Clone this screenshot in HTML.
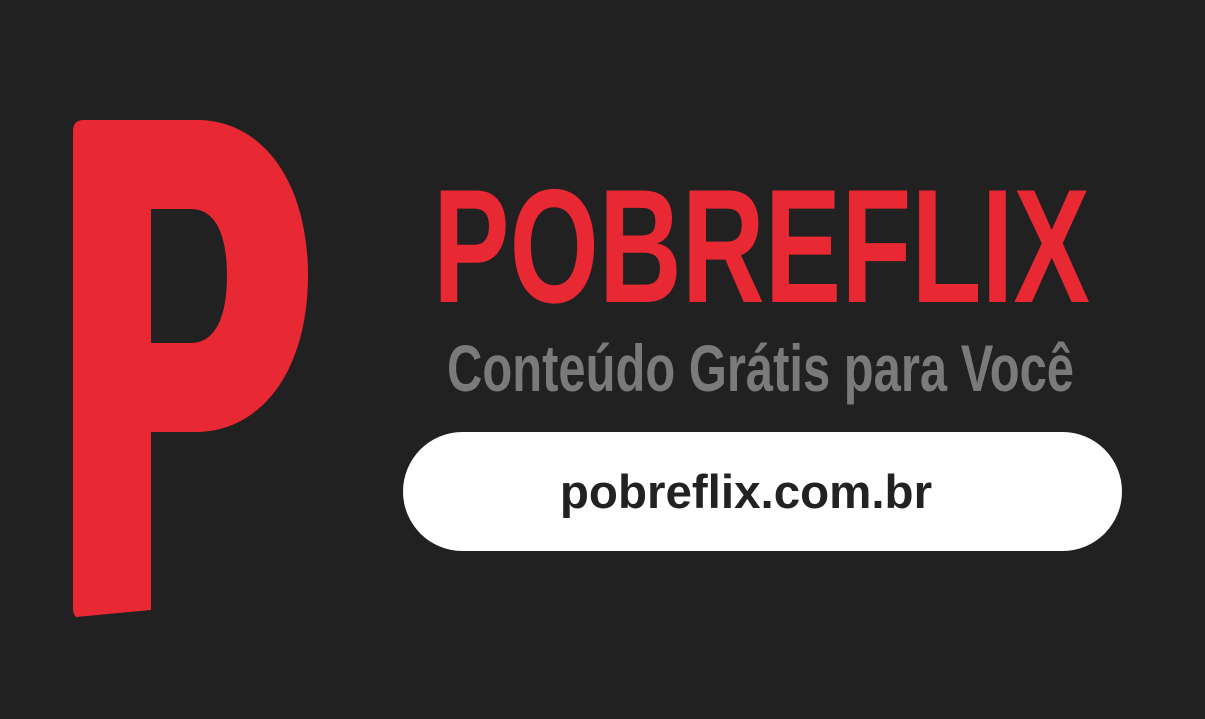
<!DOCTYPE html>
<html><head><meta charset="utf-8"><style>
html,body{margin:0;padding:0;background:#212121;width:1205px;height:719px;overflow:hidden}
</style></head><body>
<svg width="1205" height="719" viewBox="0 0 1205 719" xmlns="http://www.w3.org/2000/svg">
<rect width="1205" height="719" fill="#212121"/>
<path fill="#e82832" fill-rule="evenodd" d="M84 120 L200 120 C265 122 308 185 308 275 C308 370 262 432 195 432 L151 432 L151 610 L76 617 Q73 614 73 608 L73 131 Q73 120 84 120 Z M151 209 L191 209 C218 209 227 240 227 276 C227 315 216 343 191 343 L151 343 Z"/>
<text x="433" y="302" font-family="Liberation Sans, sans-serif" font-weight="bold" font-size="162" fill="#e82832" textLength="657" lengthAdjust="spacingAndGlyphs">POBREFLIX</text>
<text x="447" y="391" font-family="Liberation Sans, sans-serif" font-weight="bold" font-size="66" fill="#7a7a7a" textLength="627" lengthAdjust="spacingAndGlyphs">Conteúdo Grátis para Você</text>
<rect x="403" y="432" width="719" height="119" rx="59.5" fill="#ffffff"/>
<text x="746" y="508" text-anchor="middle" font-family="Liberation Sans, sans-serif" font-weight="bold" font-size="47.5" fill="#222222">pobreflix.com.br</text>
</svg>
</body></html>
